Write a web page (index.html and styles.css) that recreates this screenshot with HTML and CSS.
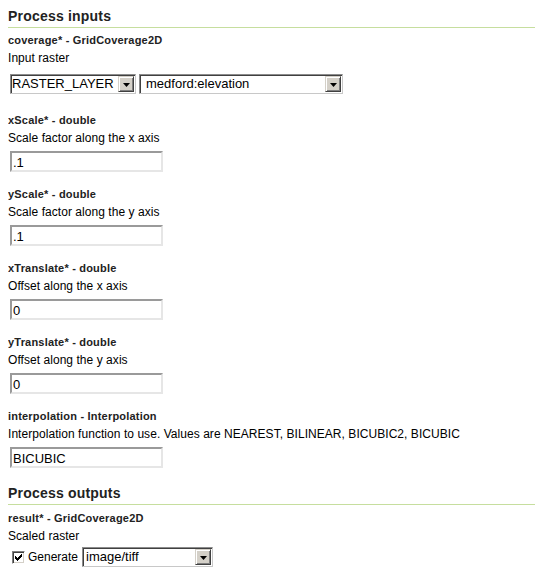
FILE: index.html
```html
<!DOCTYPE html>
<html>
<head>
<meta charset="utf-8">
<title>Process inputs</title>
<link rel="stylesheet" href="styles.css">
</head>
<body>
<h2 class="section-title">Process inputs</h2>

<div class="param param-first">
  <div class="param-name">coverage* - GridCoverage2D</div>
  <div class="param-desc">Input raster</div>
  <div class="control-row select-row">
    <div class="select select-type">
      <span class="select-value">RASTER_LAYER</span>
      <span class="select-btn"><svg width="7" height="4" viewBox="0 0 7 4"><path d="M0 0h7L3.5 4z" fill="#000"/></svg></span>
    </div>
    <div class="select select-layer">
      <span class="select-value pad4">medford:elevation</span>
      <span class="select-btn"><svg width="7" height="4" viewBox="0 0 7 4"><path d="M0 0h7L3.5 4z" fill="#000"/></svg></span>
    </div>
  </div>
</div>

<div class="param param-gap-select">
  <div class="param-name">xScale* - double</div>
  <div class="param-desc">Scale factor along the x axis</div>
  <div class="control-row"><input class="text-input" type="text" value=".1"></div>
</div>

<div class="param">
  <div class="param-name">yScale* - double</div>
  <div class="param-desc">Scale factor along the y axis</div>
  <div class="control-row"><input class="text-input" type="text" value=".1"></div>
</div>

<div class="param">
  <div class="param-name">xTranslate* - double</div>
  <div class="param-desc">Offset along the x axis</div>
  <div class="control-row"><input class="text-input" type="text" value="0"></div>
</div>

<div class="param">
  <div class="param-name">yTranslate* - double</div>
  <div class="param-desc">Offset along the y axis</div>
  <div class="control-row"><input class="text-input" type="text" value="0"></div>
</div>

<div class="param">
  <div class="param-name">interpolation - Interpolation</div>
  <div class="param-desc">Interpolation function to use. Values are NEAREST, BILINEAR, BICUBIC2, BICUBIC</div>
  <div class="control-row"><input class="text-input" type="text" value="BICUBIC"></div>
</div>

<h2 class="section-title section-outputs">Process outputs</h2>

<div class="param param-output">
  <div class="param-name">result* - GridCoverage2D</div>
  <div class="param-desc">Scaled raster</div>
  <div class="generate-row">
    <span class="checkbox"><svg width="7" height="7" viewBox="0 0 7 7"><path d="M0 2h1v1h1v1h1V3h1V2h1V1h1V0h1v3H6v1H5v1H4v1H3v1H2V6H1V5H0z" fill="#000"/></svg></span>
    <span class="generate-label">Generate</span>
    <div class="select select-format">
      <span class="select-value pad2">image/tiff</span>
      <span class="select-btn"><svg width="7" height="4" viewBox="0 0 7 4"><path d="M0 0h7L3.5 4z" fill="#000"/></svg></span>
    </div>
  </div>
</div>
</body>
</html>
```

FILE: styles.css
```css
html, body {
  background: #fff;
}
body {
  margin: 8px;
  font-family: "Liberation Sans", Arial, sans-serif;
  color: #000;
}

.section-title {
  margin: 0 -8px 0 0;
  padding: 0 0 2px 0;
  font-size: 14px;
  line-height: 17px;
  font-weight: bold;
  color: #222;
  letter-spacing: 0.2px;
  border-bottom: 1px solid #c6de9e;
}
.section-outputs {
  margin-top: 17px;
}

.param {
  margin-top: 16px;
}
.param-first {
  margin-top: 6px;
}
.param-gap-select {
  margin-top: 20px;
}
.param-output {
  margin-top: 7px;
}

.param-name {
  font-size: 11px;
  line-height: 13px;
  font-weight: bold;
  color: #222;
  letter-spacing: 0.2px;
}
.param-desc {
  margin-top: 4px;
  font-size: 12px;
  line-height: 14px;
  color: #000;
  letter-spacing: 0.05px;
}

.control-row {
  margin-top: 6px;
  padding-left: 2px;
  display: flex;
  height: 21px;
}
.select-row {
  margin-top: 9px;
  height: 20px;
  gap: 3px;
}

.text-input {
  box-sizing: border-box;
  width: 153px;
  height: 21px;
  margin: 0;
  padding: 1px 2px 0 1px;
  border: 2px solid;
  border-color: #9a9a9a #e6e6e6 #e6e6e6 #9a9a9a;
  font-family: "Liberation Sans", Arial, sans-serif;
  font-size: 13px;
  color: #000;
  background: #fff;
  outline: none;
}

.select {
  box-sizing: border-box;
  height: 20px;
  display: flex;
  align-items: stretch;
  border: 1px solid;
  border-color: #8c8c8c #c8c8c8 #c8c8c8 #8c8c8c;
  box-shadow: inset 1px 1px 0 #404040;
  padding: 1px;
  background: #fff;
}
.select-type {
  width: 126px;
}
.select-layer {
  width: 204px;
}
.select-format {
  width: 131px;
}
.select-value {
  flex: 1;
  font-size: 13px;
  line-height: 16px;
  color: #000;
  white-space: nowrap;
  overflow: hidden;
  padding-left: 0;
}
.pad4 {
  padding-left: 5px;
}
.pad2 {
  padding-left: 2px;
}
.select-btn {
  box-sizing: border-box;
  width: 16px;
  height: 16px;
  display: flex;
  align-items: center;
  justify-content: center;
  background: #d4d0c8;
  border: 1px solid;
  border-color: #d4d0c8 #404040 #404040 #d4d0c8;
  box-shadow: inset 1px 1px 0 #fff, inset -1px -1px 0 #808080;
}
.select-btn svg {
  display: block;
  margin-top: 1px;
}

.generate-row {
  margin-top: 4px;
  height: 20px;
  display: flex;
  align-items: center;
  padding-left: 4px;
}
.checkbox {
  box-sizing: border-box;
  width: 13px;
  height: 13px;
  display: flex;
  align-items: center;
  justify-content: center;
  background: #fff;
  border: 1px solid;
  border-color: #808080 #fff #fff #808080;
  box-shadow: inset 1px 1px 0 #404040, inset -1px -1px 0 #d4d0c8;
  margin-top: 1px;
}
.checkbox svg {
  display: block;
}
.generate-label {
  margin-left: 3px;
  margin-right: 4px;
  font-size: 12px;
  line-height: 14px;
  color: #000;
}
```
